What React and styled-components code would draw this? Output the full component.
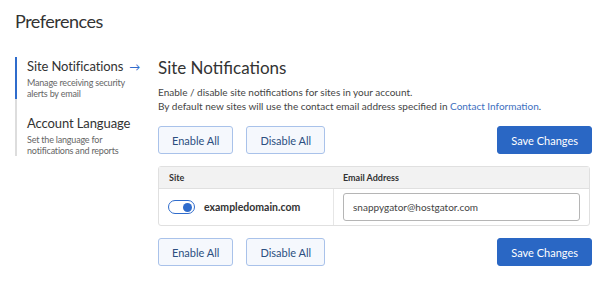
import React from 'react'
import styled, { createGlobalStyle } from 'styled-components'

const GlobalStyle = createGlobalStyle`
  body {
    margin: 0;
    background: #fff;
    font-family: Lato, "Noto Sans", sans-serif;
    color: #333;
  }
`

const Page = styled.div`
  padding: 9px 10px 0 15px;
`

const Title = styled.h1`
  margin: 0;
  font-size: 18px;
  font-weight: 400;
  line-height: 24px;
  letter-spacing: -0.5px;
  color: #333;
`

const Layout = styled.div`
  display: flex;
  margin-top: 24px;
`

const Nav = styled.nav`
  width: 126px;
  flex-shrink: 0;
  border-left: 2px solid #ddd;
  align-self: flex-start;
`

const NavItem = styled.div`
  margin-left: -2px;
  border-left: 2px solid ${({ active }) => (active ? '#2f6ccc' : 'transparent')};
  padding: ${({ active }) => (active ? '0' : '15px')} 0 0 10px;
`

const NavTitle = styled.div`
  font-size: 13px;
  line-height: 18px;
  letter-spacing: -0.1px;
  color: #333;
  white-space: nowrap;
`

const Arrow = styled.span`
  color: #2f6ccc;
  margin-left: 6px;
  font-size: 11px;
`

const NavDesc = styled.div`
  font-size: 9px;
  line-height: 11px;
  letter-spacing: -0.2px;
  color: #666;
  margin-top: ${({ gap }) => gap}px;
`

const Main = styled.main`
  flex: 1;
  padding-left: 15px;
`

const Heading = styled.h2`
  margin: 0;
  font-size: 17px;
  font-weight: 400;
  line-height: 22px;
  color: #333;
`

const Intro = styled.p`
  margin: 6px 0 0;
  font-size: 10px;
  line-height: 14px;
  color: #444;
`

const Link = styled.a`
  color: #3d6fc0;
  text-decoration: none;
`

const Actions = styled.div`
  display: flex;
  gap: 13px;
  margin-top: ${({ top }) => top}px;
`

const Button = styled.button`
  height: 28px;
  padding: 0 13px;
  font-family: inherit;
  font-size: 11px;
  border-radius: 3px;
  cursor: pointer;
  border: 1px solid ${({ primary }) => (primary ? '#2a67c4' : '#a9c2ea')};
  background: ${({ primary }) => (primary ? '#2a67c4' : '#f5f8fd')};
  color: ${({ primary }) => (primary ? '#fff' : '#2c4f80')};
  ${({ primary }) => primary && 'margin-left: auto;'}
`

const Table = styled.div`
  margin: 12px 2px 0 0;
  border: 1px solid #e0e0e0;
  border-radius: 3px;
  display: grid;
  grid-template-columns: 174px 1fr;
`

const HeadCell = styled.div`
  background: #f2f2f2;
  font-size: 9px;
  font-weight: 700;
  color: #333;
  height: 21px;
  display: flex;
  align-items: center;
  padding-left: 10px;
  border-bottom: 1px solid #e0e0e0;
`

const Cell = styled.div`
  display: flex;
  align-items: center;
  height: 36px;
  padding: 0 9px 0 ${({ pad }) => pad}px;
  ${({ divider }) => divider && 'border-left: 1px solid #e6e6e6;'}
`

const Toggle = styled.span`
  width: 27px;
  height: 14px;
  border: 1px solid #2f6ccc;
  border-radius: 8px;
  box-sizing: border-box;
  display: flex;
  align-items: center;
  justify-content: flex-end;
  padding-right: 2px;
  margin-right: 9px;
  &::after {
    content: '';
    width: 9px;
    height: 9px;
    border-radius: 50%;
    background: #2f6ccc;
  }
`

const Domain = styled.span`
  font-size: 10.5px;
  font-weight: 700;
  color: #333;
`

const Input = styled.input`
  width: 100%;
  height: 28px;
  box-sizing: border-box;
  border: 1px solid #b5b5b5;
  border-radius: 3px;
  padding: 0 9px;
  font-family: inherit;
  font-size: 10px;
  color: #444;
`

function ButtonRow({ top }) {
  return (
    <Actions top={top}>
      <Button>Enable All</Button>
      <Button>Disable All</Button>
      <Button primary>Save Changes</Button>
    </Actions>
  )
}

export default function App() {
  return (
    <>
      <GlobalStyle />
      <Page>
        <Title>Preferences</Title>
        <Layout>
          <Nav>
            <NavItem active>
              <NavTitle>
                Site Notifications<Arrow>→</Arrow>
              </NavTitle>
              <NavDesc gap={1}>
                Manage receiving security
                <br />
                alerts by email
              </NavDesc>
            </NavItem>
            <NavItem>
              <NavTitle>Account Language</NavTitle>
              <NavDesc gap={2}>
                Set the language for
                <br />
                notifications and reports
              </NavDesc>
            </NavItem>
          </Nav>
          <Main>
            <Heading>Site Notifications</Heading>
            <Intro>
              Enable / disable site notifications for sites in your account.
              <br />
              By default new sites will use the contact email address specified in{' '}
              <Link href="#">Contact Information</Link>.
            </Intro>
            <ButtonRow top={13} />
            <Table>
              <HeadCell>Site</HeadCell>
              <HeadCell>Email Address</HeadCell>
              <Cell pad={9}>
                <Toggle />
                <Domain>exampledomain.com</Domain>
              </Cell>
              <Cell pad={9} divider>
                <Input defaultValue="snappygator@hostgator.com" />
              </Cell>
            </Table>
            <ButtonRow top={12} />
          </Main>
        </Layout>
      </Page>
    </>
  )
}
